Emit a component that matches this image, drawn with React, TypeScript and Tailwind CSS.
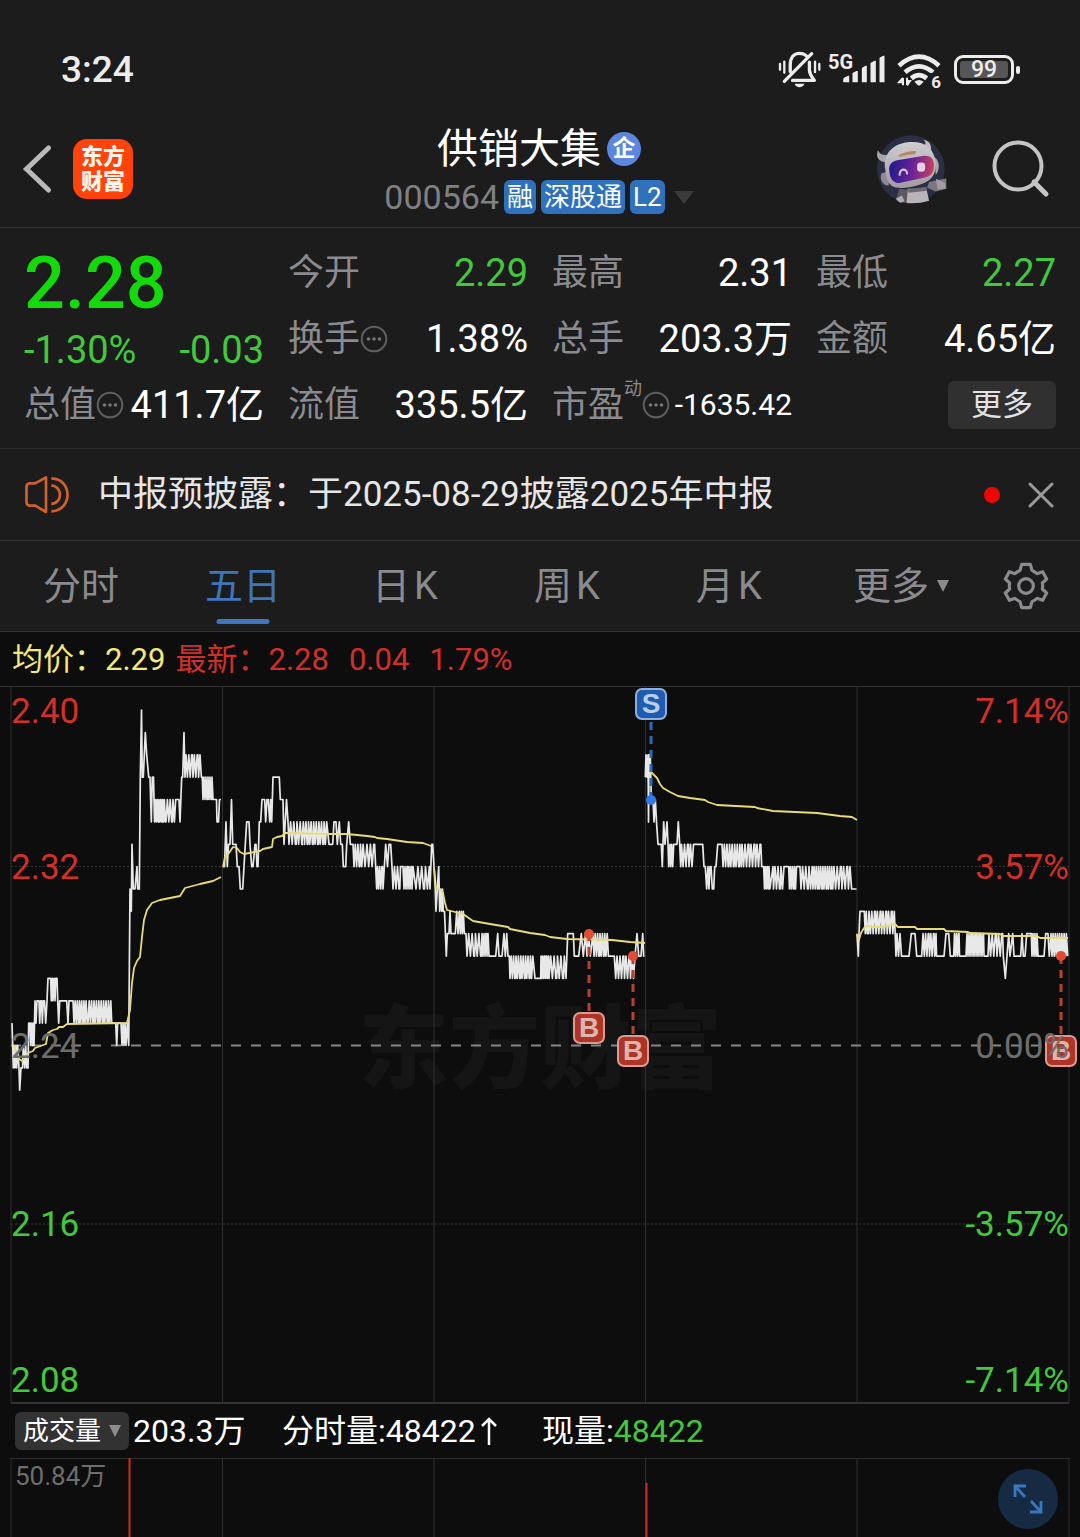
import React from "react";

type Point = [number, number];

/* Alternates between two price levels, one step every `step` pixels. */
function chatter(from: number, to: number, hi: number, lo: number, step: number): Point[] {
  const out: Point[] = [];
  let up = true;
  for (let x = from; x < to; x += step) {
    out.push([x, up ? hi : lo]);
    if (out.length % 5 === 0) out.push([x + step / 2, up ? hi : lo]);
    up = !up;
  }
  return out;
}

/* Prices are stored as cents above 2.00. */
const days: Point[][] = [
  [
    [12, 25], [12.7, 24], [13.3, 23], [14, 24], [15, 23], [16, 24], [16.7, 23], [17.7, 24], [19, 23], [19.7, 22], [21, 23], [22.5, 23],
    [23.3, 24], [24.7, 23], [25.7, 24], [26.7, 23], [28, 23], [28.7, 25], [30, 25], [30.7, 24], [31.7, 25], [32.7, 24], [33.3, 25],
    [34, 24], [35, 26], [36, 25], [37, 26], [39, 26], [39.7, 25], [40.7, 26], [41.7, 26], [42.3, 25], [43.3, 26], [44.5, 26], [45.7, 25],
    [47, 26], [48, 27], [50.7, 27], [51.3, 26], [52.3, 27], [53, 26], [54, 27], [55, 26], [55.7, 27], [57, 27], [57.7, 26], [58.7, 25],
    [59.7, 26], [66.7, 26], [68, 25], [69, 26], [73, 26],
    ...chatter(74, 88, 25, 26, 1.1), ...chatter(88, 111, 25, 26, 1.2),
    [111.7, 25], [115.7, 25], [116.7, 24], [117.7, 25], [121, 25], [122, 24], [123, 25], [124, 24], [125, 25], [126, 24], [127.3, 25],
    [128.7, 24], [130, 31], [131.3, 30], [132, 33], [133.3, 31], [135, 31], [137, 32], [137.7, 31], [139.3, 31], [140.3, 36], [141.5, 39],
    [142.3, 36], [143.3, 36], [145.3, 38], [146.7, 37], [148.7, 36], [150, 36], [151.3, 34], [152.3, 36], [153.5, 36], [154, 35],
    ...chatter(154.5, 166, 34, 35, 0.9), ...chatter(166, 175, 34, 35, 1.4),
    [175.7, 35], [179, 35], [180, 34], [181.7, 36], [182.7, 36], [184, 38], [185, 36],
    ...chatter(186, 202, 37, 36, 1.4),
    [202.3, 36], ...chatter(203, 214, 35, 36, 1), [215, 35], [216.5, 35], [217, 34], [218.5, 34], [219.5, 35], [221, 35],
  ],
  [
    [223, 32], [224.5, 32], [226, 34], [227.3, 32], [228.5, 33], [230, 33], [231.5, 35], [232.7, 33], [236, 33], [237.3, 32], [239, 32],
    [240.3, 31], [242.7, 31], [244, 32], [245.3, 33], [246.7, 34], [249, 34], [250, 33], [251.7, 32], [253, 32], [255, 33], [256, 33],
    [257, 32], [258, 32], [259.3, 34], [260.7, 34], [262, 35], [264.7, 35], [265.7, 34], [267, 35], [268.3, 35], [269.7, 34], [270.7, 35],
    [271.7, 34], [273, 36], [279.3, 36], [280.3, 35], [283, 35], [284, 33], [286.5, 35], [288, 34],
    ...chatter(289, 302, 33, 34, 1.6), ...chatter(302, 328, 33, 34, 1.3),
    [329, 33], [332.7, 33], [334, 34], [336, 34], [337.3, 33], [339.3, 34], [340.7, 33], [342.3, 33], [343.3, 32], [345.7, 32],
    [346.7, 33], [348.7, 34], [350.3, 33], [353, 33],
    ...chatter(354, 364, 32, 33, 1.3), [365, 32], ...chatter(367, 375, 33, 32, 1.7),
    [376.7, 31], ...chatter(377.5, 384, 32, 31, 1.1), [385.7, 33], [387.5, 32], [389, 33], [390.7, 33], [392, 32],
    ...chatter(393, 402, 31, 32, 1.5), ...chatter(403, 414, 32, 31, 1), ...chatter(416, 430, 31, 32, 1.9),
    [430, 31], [431.7, 33], [432.7, 33], [434, 32],
  ],
  [
    [434, 32], [435.3, 31], [436, 30], [437.3, 31], [438.7, 32], [439.7, 30], [440.7, 31], [441.7, 30], [442.5, 31], [443.3, 30],
    [444.5, 30], [446.3, 28], [447.3, 29], [449, 29], [450, 30], [451, 29], [455.3, 29], [456.7, 30], [458, 29], [459.3, 30],
    [460.3, 29], [461.3, 30], [462.3, 29], [463.3, 30], [464.3, 29], [466, 29],
    ...chatter(467, 482, 28, 29, 1.7), ...chatter(482, 490, 29, 28, 1),
    [490.7, 28], [495.7, 28], [497.7, 29], [499, 28], [502, 28], [504, 29], [505.3, 28], [506.7, 29], [508, 28], [509.3, 28],
    ...chatter(510, 534, 27, 28, 1.2), [535, 27], [540.7, 27], ...chatter(541, 549, 28, 27, 0.9), ...chatter(549, 566, 27, 28, 1.7),
    [566, 27], [567.7, 29], [573.3, 29], [574.3, 28], [578.7, 28], [581.3, 29], [583.3, 28], [585.5, 29], [587, 28], [588.7, 29],
    [590.3, 28], [593, 29], ...chatter(594, 609, 28, 29, 1.2),
    [610, 28], [614.3, 28], [615.7, 27], ...chatter(617, 634, 28, 27, 1.5),
    [635, 28], [637, 29], [638.7, 28], [641, 28], [642.7, 29], [643.7, 28], [644.5, 28],
  ],
  [
    [645.3, 36], [646, 37], [647, 36], [648, 37], [648.5, 34], [649.3, 37], [650.3, 37], [651.3, 35], [653, 35], [654, 34], [655.3, 35],
    [656.5, 34], [658, 33], [661.3, 33], [662.3, 32], [663.7, 34], [665, 33], [667, 34], [668, 33], [668.7, 32], [670, 33], [670.7, 32],
    [671.7, 33], [672.7, 32], [673.7, 33], [677, 33], [678.3, 34], [679.7, 33], [680.7, 32],
    ...chatter(681.5, 694, 33, 32, 1.5),
    [695.3, 33], [702.7, 33], [704, 32], [705.3, 32], [706.7, 31], [708, 32], [709, 31], [710, 32], [711, 32], [712.3, 31], [713.7, 31],
    [714.7, 32], [716, 32], [717.7, 33], [722, 33],
    ...chatter(723, 742, 32, 33, 1.3), ...chatter(742, 761, 33, 32, 1.5),
    [761.7, 32], [763.7, 32], ...chatter(764.5, 770, 31, 32, 0.9), [773, 32], ...chatter(773.5, 783, 31, 32, 1.5),
    [784, 32], [788.7, 32], ...chatter(789.5, 797, 31, 32, 1), [800, 32], ...chatter(801, 813, 31, 32, 1.6),
    ...chatter(813, 834, 31, 32, 1.1), ...chatter(834, 852, 32, 31, 1.6), [853.7, 31], [856.5, 31],
  ],
  [
    [857, 29], [858.3, 28], [859, 29], [860, 30], [864.3, 30], [865.3, 29], [866.3, 30], [867.3, 29], [868.3, 29],
    ...chatter(869, 893, 30, 29, 1.4), [894.3, 30], [896, 28],
    ...chatter(897, 902, 29, 28, 1.5), [902, 28], [909, 28], [911.3, 29], [915, 29], [916.7, 28], [921.7, 28],
    ...chatter(923, 936, 29, 28, 1.3), [936.5, 28], [944, 28], [946, 29], [948.7, 29], [950.3, 28], [953.7, 28],
    ...chatter(954.5, 960, 29, 28, 1), [961, 28], [966, 28], ...chatter(967, 985, 29, 28, 1), [988, 28],
    ...chatter(989, 1002, 29, 28, 1.6), [1003.3, 28], [1005.3, 27], [1007, 28], [1008.7, 29], [1010, 28], [1012.7, 29], [1014, 28],
    [1020.7, 28], [1022, 29], [1023.3, 28], [1025, 28], [1026.7, 29], [1031.3, 29], ...chatter(1032, 1039, 28, 29, 1),
    [1039.5, 28], [1044, 28], [1045.7, 29], [1048, 29], [1049.3, 28], [1051, 29], ...chatter(1052, 1067, 28, 29, 1.1), [1067.7, 28],
  ],
];

const averages = [
  "14,1046 18,1058 22,1061 28,1053 33,1051 35,1048 46,1044 48,1033 53,1030 57,1029 59,1027 63,1027 67,1024 127,1023 130,1010 132,983 134,968 137,961 140,957 142,937 144,920 147,910 152,903 160,900 180,896 185,888 200,884 213,881 221,877",
  "223,867 225,857 229,853 233,847 237,848 240,852 244,854 260,851 263,849 272,847 273,839 277,837 282,836 285,833 290,833 327,834 347,834 367,836 375,837 377,838 387,839 407,842 423,843 431,846",
  "434,867 436,888 441,890 443,893 445,903 447,910 455,912 463,914 473,921 490,924 508,927 510,929 530,933 545,935 550,937 567,939 612,940 630,942 645,943",
  "649,771 651,772 653,774 657,778 660,784 663,788 670,792 678,796 690,798 705,800 708,802 717,805 755,807 757,808 773,811 817,813 840,816 852,817 857,820",
  "857,935 859,940 861,933 864,928 867,926 873,927 883,927 895,924 898,927 915,927 917,929 944,929 946,931 968,932 970,933 1000,934 1003,936 1037,936 1040,938 1068,938",
];

const priceY = (cents: number) => 1045.5 - (cents - 24) * 22.36;
const toPoints = (pts: Point[]) => pts.map(([x, c]) => `${x.toFixed(1)},${priceY(c).toFixed(1)}`).join(" ");

const gridX = [11, 222.5, 434, 645.5, 857, 1069];

const trades = [
  { kind: "S", x: 651, dot: 800, from: 722, to: 796, top: 688 },
  { kind: "B", x: 589, dot: 934, from: 1011, to: 938, top: 1012 },
  { kind: "B", x: 633, dot: 956, from: 1034, to: 960, top: 1035 },
  { kind: "B", x: 1061, dot: 956, from: 1034, to: 960, top: 1035 },
];

function Dots() {
  return (
    <svg viewBox="0 0 28 28" className="size-7 shrink-0" fill="none" aria-hidden="true">
      <circle cx="14" cy="14" r="12.3" stroke="#5f5f61" strokeWidth="2" />
      <g fill="#77777a">
        <circle cx="8.5" cy="14" r="1.8" />
        <circle cx="14" cy="14" r="1.8" />
        <circle cx="19.5" cy="14" r="1.8" />
      </g>
    </svg>
  );
}

function StatusBar() {
  return (
    <div className="flex h-[111px] items-center justify-between pt-7 pr-[60px] pl-[61px] text-[#ececec]">
      <time className="text-[37px] leading-10 font-medium">3:24</time>
      <div className="flex items-center">
        <svg viewBox="82 64 130 112" className="h-[37px] w-[43px]" fill="none" stroke="#ececec" strokeWidth="10" aria-hidden="true">
          <path d="M119 126V106C119 84 130 71 147 71C156 71 163 74 168 79" strokeLinecap="round" />
          <path d="M177 98V122C178 136 184 142 192 153H126" strokeLinecap="round" strokeLinejoin="round" />
          <path d="M184 72L101 156" strokeLinecap="round" />
          <path d="M132 163H162C158 177 136 177 132 163Z" fill="#ececec" stroke="none" />
          <path d="M88 103V121M101 96V130M194 96V128M207 103V121" strokeWidth="7" strokeLinecap="round" />
        </svg>
        <div className="relative ml-[7px] h-[34px] w-[57px]">
          <span className="absolute top-0 left-0 text-[20px] leading-[18px] font-bold">5G</span>
          <svg viewBox="276 78 128 84" className="absolute right-0 bottom-1 h-7 w-[43px]" fill="#ececec" aria-hidden="true">
            <path d="M279 152Q279 147 284 145L294 140H297V160H279ZM307 132L319 126H323V160H307ZM335 117L346 110H350V160H335ZM361 102L373 95H377V160H361ZM388 86L399 80H403V160H388Z" />
          </svg>
        </div>
        <div className="relative ml-3 h-[34px] w-[44px]">
          <svg viewBox="438 69 132 102" className="h-[34px] w-[44px]" fill="none" stroke="#ececec" strokeWidth="14" aria-hidden="true">
            <path d="M444 107Q504 53 564 107M462 127Q504 91 546 127M481 145Q504 126 527 145" />
            <path d="M490 155Q504 145 518 155L508 165Q504 168 500 165Z" fill="#ececec" stroke="none" />
            <path d="M456 144V166M456 144L444 157H456M468 143V165M468 166L477 153H468" strokeWidth="6" />
          </svg>
          <span className="absolute right-0 -bottom-1 bg-[#1c1c1c] pl-0.5 text-[17px] leading-[18px] font-bold">6</span>
        </div>
        <div className="ml-[13px] flex items-center gap-0.5">
          <div className="flex h-[29px] w-[60px] rounded-[9px] border-3 border-[#ececec] p-[3px]">
            <span className="flex flex-1 items-center justify-center rounded-[3px] bg-[#565656] text-[23px] leading-5 font-medium">99</span>
          </div>
          <div className="h-2 w-1 rounded-sm bg-[#ececec]" />
        </div>
      </div>
    </div>
  );
}

function Robot() {
  return (
    <svg viewBox="376 316 214 208" className="h-[69px] w-[71px]" aria-hidden="true">
      <defs>
        <linearGradient id="visor" x1="0" x2="1" y1="0.4" y2="0.5">
          <stop offset="0" stopColor="#22188f" />
          <stop offset="0.55" stopColor="#6e2596" />
          <stop offset="1" stopColor="#c8405f" />
        </linearGradient>
        <linearGradient id="shell" x1="0" x2="0" y1="0" y2="1">
          <stop offset="0" stopColor="#d0cdd1" />
          <stop offset="1" stopColor="#a09ba1" />
        </linearGradient>
      </defs>
      <circle cx="481" cy="419" r="102" fill="#2a2f44" />
      <path d="M406 398C384 398 374 382 382 362C388 374 396 378 410 376Z" fill="#aaa6ac" />
      <path d="M512 348C528 348 528 340 520 330C540 334 546 350 540 372Z" fill="#c0bdc2" />
      <path d="M446 478L436 512C450 522 462 521 474 518V482Z" fill="#5d5860" />
      <path d="M536 458L588 446V478L556 486L530 474Z" fill="#7d787f" />
      <path d="M556 448L584 460L586 478L562 480Z" fill="#a19ca2" />
      <path d="M472 478H528L536 514Q504 524 468 521Z" fill="#b8b4b9" />
      <path d="M472 480L528 472L530 484L474 490Z" fill="#6e6870" />
      <path d="M436 508L454 498L462 516L448 520Z" fill="#b2aeb4" />
      <path d="M392 432C386 448 396 470 414 468L418 424Z" fill="#8f8a91" />
      <path d="M552 382C568 392 570 420 556 436Z" fill="#aaa6ac" />
      <path d="M404 420C396 376 424 344 470 338C520 332 552 354 556 400C558 440 540 458 500 468C470 476 440 480 422 468C410 458 406 440 404 420Z" fill="url(#shell)" />
      <path d="M416 424C414 404 424 396 440 392L516 379C538 376 550 386 550 404C552 426 542 440 524 444L450 460C430 464 418 450 416 424Z" fill="url(#visor)" />
      <path d="M444 376Q470 364 496 364L495 373Q468 375 446 382Z" fill="#b8875a" />
      <path d="M447 436Q448 422 458 420Q468 420 470 432" fill="none" stroke="#d8c8ec" strokeWidth="6" strokeLinecap="round" />
      <rect x="500" y="399" width="24" height="28" rx="10" fill="#e8d0e2" />
    </svg>
  );
}

function Header() {
  return (
    <header className="grid h-[117px] grid-cols-[1fr_auto_1fr] items-center border-b border-[#333335] pr-6 pl-[22px]">
      <div className="flex items-center gap-5">
        <button aria-label="返回">
          <svg viewBox="0 0 30 50" className="h-[50px] w-[31px]" fill="none" stroke="#bababa" strokeWidth="5" strokeLinecap="round" aria-hidden="true">
            <path d="M26 4L4 25L26 46" />
          </svg>
        </button>
        <div className="flex size-[60px] items-center justify-center rounded-[14px] bg-[#ff430a] text-center text-[22px] leading-[25px] font-black text-[#fff3ea]">
          <span>东方<br />财富</span>
        </div>
      </div>
      <div className="flex flex-col items-center gap-1.5">
        <h1 className="flex items-center gap-1.5 text-[41px] leading-[50px] text-white">
          供销大集
          <span className="flex size-[34px] items-center justify-center rounded-full bg-[#5d86de] text-[23px] leading-6 font-bold">企</span>
        </h1>
        <div className="flex items-center gap-[5px] text-[26px] leading-[34px] text-white">
          <span className="text-[34px] text-[#808084]">000564</span>
          <span className="rounded-md bg-[#2f71bd] px-[3px]">融</span>
          <span className="rounded-md bg-[#2f71bd] px-[3px]">深股通</span>
          <span className="rounded-md bg-[#2f71bd] px-[3px]">L2</span>
          <svg viewBox="0 0 20 13" className="ml-1 h-[13px] w-5" fill="#3b3b3c" aria-hidden="true"><path d="M0 0H20L10 13Z" /></svg>
        </div>
      </div>
      <div className="flex items-center justify-end gap-[45px] pr-1.5">
        <button aria-label="智能助手"><Robot /></button>
        <button aria-label="搜索">
          <svg viewBox="0 0 58 58" className="size-[58px]" fill="none" stroke="#c4c4c4" strokeWidth="4" strokeLinecap="round" aria-hidden="true">
            <circle cx="26" cy="26" r="23.500" />
            <path d="M42 42L54 54" strokeWidth="5" />
          </svg>
        </button>
      </div>
    </header>
  );
}

function Stat({ label, value, info, green }: { label: string; value: string; info?: boolean; green?: boolean }) {
  return (
    <div className="flex h-[66px] items-center justify-between whitespace-nowrap">
      <dt className="flex items-center text-[36px] leading-10 text-[#8b8b8f]">{label}{info && <Dots />}</dt>
      <dd className={green ? "text-[38px] leading-10 text-[#43c83c]" : "text-[38px] leading-10 text-white"}>{value}</dd>
    </div>
  );
}

function Quote() {
  return (
    <section className="border-b border-[#29292a] px-6 pt-3 pb-2.5">
      <div className="grid grid-cols-4 gap-x-6">
        <div className="row-span-2 flex flex-col">
          <p className="h-[88px] text-[72px] leading-[88px] font-medium text-[#14d90b]">2.28</p>
          <p className="flex h-11 items-center justify-between text-[38px] leading-10 text-[#43c83c]">
            <span>-1.30%</span><span>-0.03</span>
          </p>
        </div>
        <dl className="contents">
          <Stat label="今开" value="2.29" green />
          <Stat label="最高" value="2.31" />
          <Stat label="最低" value="2.27" green />
          <Stat label="换手" value="1.38%" info />
          <Stat label="总手" value="203.3万" />
          <Stat label="金额" value="4.65亿" />
          <Stat label="总值" value="411.7亿" info />
          <Stat label="流值" value="335.5亿" />
          <div className="flex h-[66px] items-center justify-between whitespace-nowrap">
            <dt className="flex items-center text-[36px] leading-10 text-[#8b8b8f]">
              市盈<sup className="top-0 mb-8 text-[18px] leading-5">动</sup><Dots />
            </dt>
            <dd className="text-[30px] leading-10 text-white">-1635.42</dd>
          </div>
        </dl>
        <div className="flex h-[66px] items-center justify-end">
          <button className="h-12 w-[108px] rounded-md bg-[#303030] text-[31px] leading-10 text-[#e2e2e2]">更多</button>
        </div>
      </div>
    </section>
  );
}

function Notice() {
  return (
    <section className="flex h-[92px] items-center border-b border-[#323233] px-6">
      <svg viewBox="72 72 134 116" className="h-[39px] w-[46px]" fill="none" stroke="#d2602c" strokeWidth="8" strokeLinejoin="round" aria-hidden="true">
        <path d="M136 79V182L104 163H88Q78 162 78 152V108Q78 98 88 97H104Z" />
        <path d="M152 82C216 84 216 178 152 180M152 103C186 106 186 156 152 158" />
      </svg>
      <p className="ml-7 flex-1 text-[35px] leading-10 text-[#e6e6e6]">中报预披露：于2025-08-29披露2025年中报</p>
      <span className="size-4 rounded-full bg-[#ee0505]" />
      <button aria-label="关闭" className="ml-7">
        <svg viewBox="0 0 26 26" className="size-[26px]" fill="none" stroke="#9a9a9a" strokeWidth="3" strokeLinecap="round" aria-hidden="true">
          <path d="M2 2L24 24M24 2L2 24" />
        </svg>
      </button>
      <span className="w-0.5" />
    </section>
  );
}

function Tabs() {
  return (
    <nav className="grid h-[91px] grid-cols-[162fr_162fr_162fr_162fr_162fr_182fr_88fr] border-b border-[#323233] text-[38px] leading-[42px] text-[#8b8b8f]">
      <button>分时</button>
      <button className="relative text-[#3f76bb]">
        五日
        <span className="absolute bottom-[7px] left-1/2 h-[5px] w-[53px] -translate-x-1/2 rounded-full bg-[#3f76bb]" />
      </button>
      <button>日<span className="ml-1">K</span></button>
      <button>周<span className="ml-1">K</span></button>
      <button>月<span className="ml-1">K</span></button>
      <button className="flex items-center justify-center gap-2">
        更多
        <svg viewBox="0 0 12 12" className="size-3" fill="#8b8b8f" aria-hidden="true"><path d="M0 0H12L6 12Z" /></svg>
      </button>
      <button aria-label="设置" className="flex items-center justify-center pr-5">
        <svg viewBox="1343 336 136 144" className="h-12 w-[46px]" fill="none" stroke="#8b8b8f" strokeWidth="9.500" aria-hidden="true">
          <path d="M1398 343H1424L1429 361Q1437 365 1444 371L1461 365L1473 387L1460 399Q1462 408 1460 417L1473 429L1461 451L1444 445Q1437 451 1429 455L1424 473H1398L1393 455Q1385 451 1378 445L1361 451L1349 429L1362 417Q1360 408 1362 399L1349 387L1361 365L1378 371Q1385 365 1393 361Z" strokeLinejoin="round" />
          <circle cx="1411" cy="408" r="22" />
        </svg>
      </button>
    </nav>
  );
}

function AxisRow({ left, right, place }: { left: string; right: string; place: string }) {
  return (
    <div className={`absolute inset-x-[11px] flex justify-between text-[35px] leading-10 ${place}`}>
      <span>{left}</span>
      <span>{right}</span>
    </div>
  );
}

function PriceChart() {
  return (
    <section className="relative h-[718px] border-t border-[#333333]" aria-label="五日走势图">
      <div className="absolute inset-x-0 top-[298px] text-center text-[91px] leading-[130px] font-black text-[#151515]">东方财富</div>
      <svg viewBox="0 687 1080 717" preserveAspectRatio="none" className="absolute inset-0 size-full" fill="none" aria-hidden="true">
        {gridX.map((x) => <path key={x} d={`M${x} 687V1403`} stroke="#303030" />)}
        <path d="M11 1403H1069" stroke="#333333" strokeWidth="2" />
        <path d="M11 866.5H1069M11 1224H1069" stroke="#333333" strokeDasharray="2 2" />
        <path d="M11 1045.500H1069" stroke="#858585" strokeWidth="2" strokeDasharray="10 10" />
        {days.map((d, i) => <polyline key={i} points={toPoints(d)} stroke="#e8e8e8" strokeWidth="1.7" strokeLinejoin="round" />)}
        {averages.map((a, i) => <polyline key={i} points={a} stroke="#e8dc7a" strokeWidth="1.8" strokeLinejoin="round" />)}
        {trades.map((t) => (
          <g key={t.x} stroke={t.kind === "S" ? "#2f68b4" : "#b8402f"}>
            <path d={`M${t.x} ${t.from}V${t.to}`} strokeWidth="3" strokeDasharray="8 6" />
            <circle cx={t.x} cy={t.dot} r="5" stroke="none" fill={t.kind === "S" ? "#2f7ae5" : "#e24b34"} />
          </g>
        ))}
      </svg>
      {trades.map((t) => (
        <span
          key={t.x}
          className={`absolute flex size-8 -translate-x-1/2 items-center justify-center rounded-[7px] border-2 font-[Liberation_Sans] text-[28px] leading-7 font-bold ${
            t.kind === "S" ? "border-[#8fb0dc] bg-[#1f5cb0] text-[#b9cdea]" : "border-[#dc9a90] bg-[#ac3526] text-[#e0b4ae]"
          }`}
          style={{ left: `${(t.x / 1080) * 100}%`, top: t.top - 687 }}
        >
          {t.kind}
        </span>
      ))}
      <AxisRow left="2.40" right="7.14%" place="top-[5px] text-[#d0302a]" />
      <AxisRow left="2.32" right="3.57%" place="top-[161px] text-[#d0302a]" />
      <AxisRow left="2.24" right="0.00%" place="top-[340px] text-[#6d6d6d]" />
      <AxisRow left="2.16" right="-3.57%" place="top-[518px] text-[#43c83c]" />
      <AxisRow left="2.08" right="-7.14%" place="top-[674px] text-[#43c83c]" />
    </section>
  );
}

function Volume() {
  return (
    <>
      <div className="flex h-[54px] items-center pl-[15px] text-[32px] leading-10 whitespace-nowrap text-white">
        <button className="flex h-[38px] w-[114px] items-center justify-center gap-2 rounded-md bg-[#323232] text-[26px]">
          成交量
          <svg viewBox="0 0 12 12" className="size-3" fill="#8d8d8d" aria-hidden="true"><path d="M0 0H12L6 12Z" /></svg>
        </button>
        <span className="ml-1 w-[149px]">203.3万</span>
        <span className="flex w-[260px] items-center">
          分时量:48422
          <svg viewBox="0 0 18 30" className="ml-1 h-[30px] w-[18px]" fill="none" stroke="#ffffff" strokeWidth="2.500" aria-hidden="true">
            <path d="M9 29V3M2 10L9 3L16 10" />
          </svg>
        </span>
        <span>现量:<span className="text-[#43c83c]">48422</span></span>
      </div>
      <section className="relative min-h-[78px] flex-1 overflow-hidden" aria-label="成交量图">
        <svg viewBox="0 1458 1080 79" preserveAspectRatio="none" className="absolute inset-0 size-full" fill="none" aria-hidden="true">
          <path d="M11 1458.500H1069" stroke="#2c2c2c" />
          {gridX.map((x) => <path key={x} d={`M${x} 1458V1537`} stroke="#303030" />)}
          <path d="M129.500 1458V1537M646.500 1483V1537" stroke="#cf2a20" strokeWidth="2" />
        </svg>
        <span className="absolute top-0.5 left-[15px] text-[26px] leading-8 text-[#6d6d6d]">50.84万</span>
        <button aria-label="全屏" className="absolute top-[11px] right-[22px] flex size-[60px] items-center justify-center rounded-full bg-[#172a43]">
          <svg viewBox="0 0 32 32" className="size-8" fill="none" stroke="#3a78be" strokeWidth="2.800" aria-hidden="true">
            <path d="M3 14V3H14M3 3L13 14M19 18L29 29M29 18V29H18" />
          </svg>
        </button>
      </section>
    </>
  );
}

export default function App() {
  return (
    <main className="flex min-h-screen flex-col bg-[#0d0d0d] font-[Roboto,'Noto_Sans_CJK_SC',sans-serif]" lang="zh-CN">
      <div className="bg-[#1c1c1c]">
        <StatusBar />
        <Header />
        <Quote />
        <Notice />
        <Tabs />
      </div>
      <div className="flex h-[54px] items-center pt-0.5 pl-3 text-[31px] leading-10 whitespace-nowrap text-[#d0302a]">
        <span className="text-[#f3e97c]">均价：2.29</span>
        <span className="ml-2.5">最新：2.28</span>
        <span className="ml-5">0.04</span>
        <span className="ml-5">1.79%</span>
      </div>
      <PriceChart />
      <Volume />
    </main>
  );
}
